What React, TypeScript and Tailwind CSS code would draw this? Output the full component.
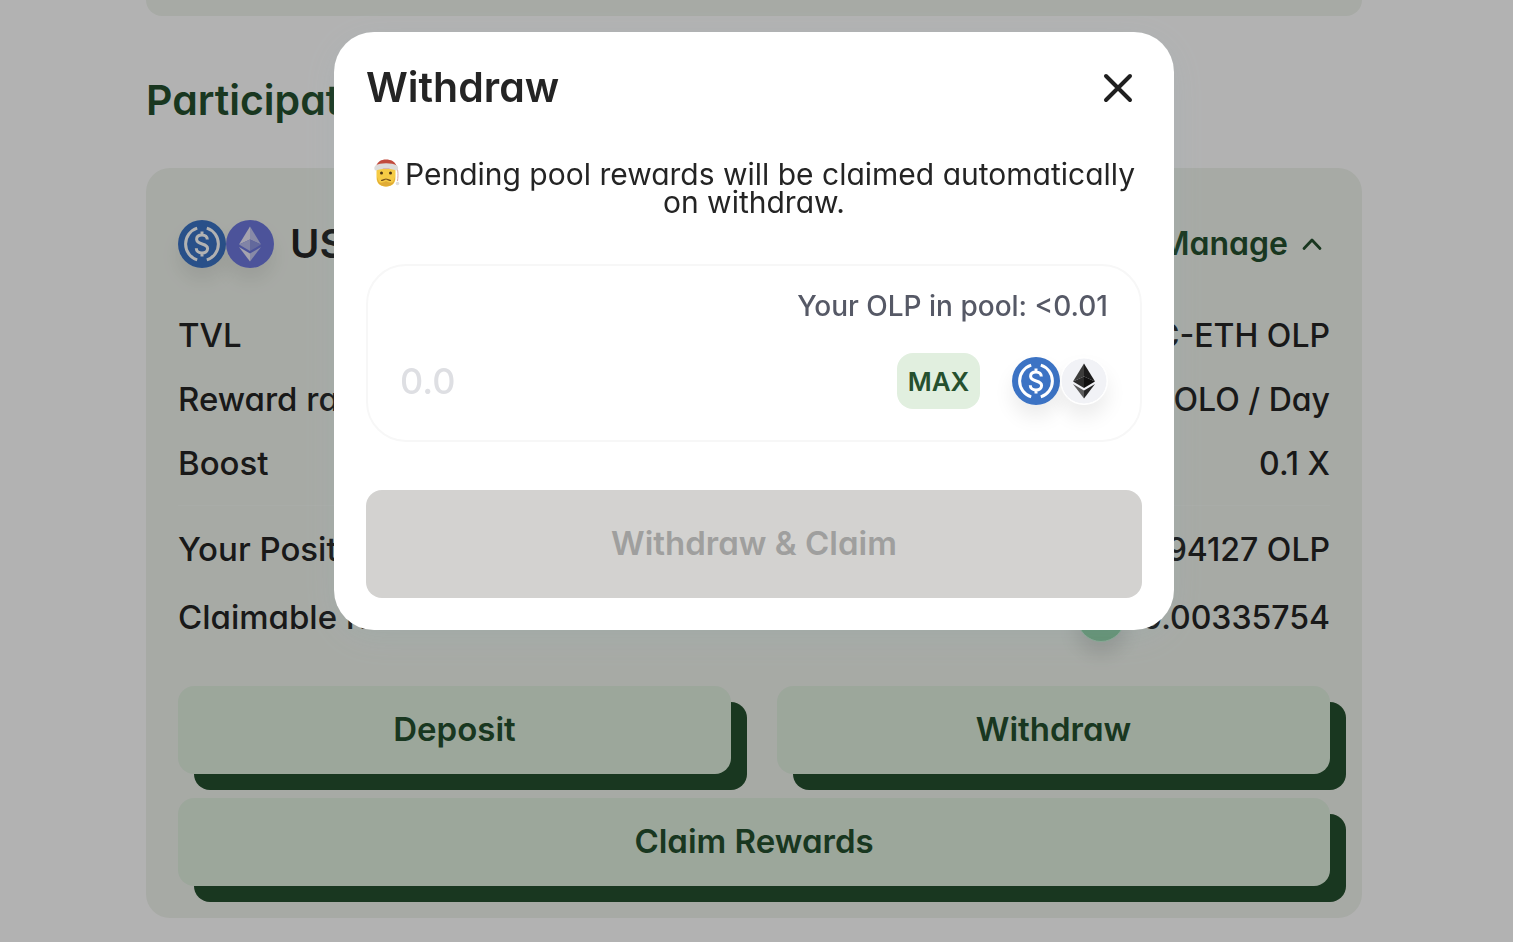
import React, { useState } from "react";
import type { ReactNode } from "react";

function UsdcIcon() {
  return (
    <svg viewBox="0 0 48 48" className="size-12" aria-hidden="true">
      <circle cx="24" cy="24" r="24" fill="#3c73c4" />
      <g fill="none" stroke="#fff" strokeWidth="3">
        <path d="M19.200 8.100A16.700 16.700 0 0 0 19.200 39.900" />
        <path d="M28.800 8.100A16.700 16.700 0 0 1 28.800 39.900" />
        <path d="M29.300 19.600c0-2.800-2.100-4.600-5.300-4.600-3.300 0-5.400 1.700-5.400 4.300 0 6.200 11 3.200 11 9.200 0 2.700-2.200 4.500-5.600 4.500-3.500 0-5.700-1.900-5.700-4.800M24 11.500v4M24 32.500v4" />
      </g>
    </svg>
  );
}

function EthIcon({ dark = false }: { dark?: boolean }) {
  const c = dark
    ? { bg: "#f1f2f6", a: "#3c3c3b", b: "#1c1c1c", m: "#2b2b2b", n: "#101010", l: "#5c5c5c", r: "#262626" }
    : { bg: "#6d78dd", a: "#eceafa", b: "#c3c6f0", m: "#b9bdee", n: "#8f97e0", l: "#eceafa", r: "#c3c6f0" };
  return (
    <svg viewBox="0 0 48 48" className="size-12" aria-hidden="true">
      <circle cx="24" cy="24" r={dark ? 23 : 24} fill={c.bg} stroke={dark ? "#fff" : "none"} strokeWidth="1" />
      <path d="M24 6.500 13 24.500l11-5z" fill={c.a} />
      <path d="M24 6.500v13l11 5z" fill={c.b} />
      <path d="M13 24.500l11-5V31z" fill={c.m} />
      <path d="M35 24.500l-11-5V31z" fill={c.n} />
      <path d="M13 27l11 6.500V41.500z" fill={c.l} />
      <path d="M35 27l-11 6.500V41.500z" fill={c.r} />
    </svg>
  );
}

function ClausIcon() {
  return (
    <svg viewBox="0 0 28 32" className="-my-2 mr-1 inline-block h-8 w-7 align-[4px]" role="img" aria-label="Mx Claus">
      <path d="M22 7c3 3 3.500 10 2.500 17" stroke="#d9a9a2" strokeWidth="1" fill="none" />
      <path d="M3.500 12h19v8c0 6-3 9.500-9.500 9.500S3.500 26 3.500 20z" fill="#f6cb45" />
      <path d="M4 20c0 6 3 9.500 9 9.500s9-3.500 9-9.500l-2 5c-2 1.500-4 .5-7-1-3 1.500-5 2.500-7 1z" fill="#e0ab35" />
      <circle cx="8.500" cy="16" r="1.500" fill="#4d3514" />
      <circle cx="17.500" cy="16" r="1.500" fill="#4d3514" />
      <path d="M8 23.500c2.500 0 3.500-1.500 5-1.500s2.500 1.500 5 1.500" stroke="#7b551c" strokeWidth="1.200" fill="none" />
      <path d="M3 9C5 4.500 8 2.500 13 2.500S22 4.500 23.500 9v3H3z" fill="#c24b3d" />
      <path d="M2.500 8.500C7 5.500 19 5.500 24 8.500c1.800 1.500 1.500 5-.5 5-6-2.500-14.500-2.500-20.500 0-2 0-2.300-3.500-.5-5z" fill="#dddcda" />
      <circle cx="24.500" cy="26.500" r="1.800" fill="#dedede" />
    </svg>
  );
}

function TokenPair({ dark = false }: { dark?: boolean }) {
  return (
    <span className="flex">
      <span className="rounded-full shadow-[0_12px_20px_rgba(0,0,0,0.08)]">
        <UsdcIcon />
      </span>
      <span className="rounded-full shadow-[0_12px_20px_rgba(0,0,0,0.08)]">
        <EthIcon dark={dark} />
      </span>
    </span>
  );
}

function Row({ label, children }: { label: string; children: ReactNode }) {
  return (
    <div className="flex h-16 items-center justify-between">
      <dt className="text-[33px]">{label}</dt>
      <dd className="flex items-center gap-4 text-[32px]">{children}</dd>
    </div>
  );
}

function ActionButton({ children }: { children: ReactNode }) {
  return (
    <button
      type="button"
      className="h-22 w-full rounded-2xl bg-[#e0efdf] text-[33px] font-semibold text-[#25502e] shadow-[16px_16px_0_#25502e]"
    >
      {children}
    </button>
  );
}

function WithdrawDialog({ onClose }: { onClose: () => void }) {
  const [amount, setAmount] = useState("");
  return (
    <div className="fixed inset-0 flex items-start justify-center overflow-hidden bg-black/30 pt-8 pr-[5px]">
      <section
        role="dialog"
        aria-modal="true"
        aria-labelledby="withdraw-title"
        className="w-full max-w-[840px] rounded-[40px] bg-white p-8 shadow-[0_8px_32px_rgba(130,170,180,0.15)]"
      >
        <header className="flex h-12 items-center justify-between">
          <h2 id="withdraw-title" className="text-[41px] font-semibold">
            Withdraw
          </h2>
          <button type="button" aria-label="Close" onClick={onClose} className="flex size-12 items-center justify-center">
            <svg viewBox="0 0 48 48" className="size-12" fill="none" stroke="#1f1f1f" strokeWidth="4" strokeLinecap="round">
              <path d="M12 12l24 24M36 12l-24 24" />
            </svg>
          </button>
        </header>
        <p className="mt-12 text-center text-[30px] leading-7">
          <ClausIcon />
          Pending pool rewards will be claimed automatically on withdraw.
        </p>
        <div className="mt-12 rounded-[40px] border-2 border-[#f7f7f7] px-8 pt-5 pb-[31px]">
          <p className="text-right text-[28px] leading-10 font-medium text-[#565966]">Your OLP in pool: &lt;0.01</p>
          <div className="mt-[27px] flex h-14 items-center">
            <input
              type="text"
              inputMode="decimal"
              aria-label="Amount to withdraw"
              placeholder="0.0"
              value={amount}
              onChange={(e) => setAmount(e.target.value)}
              className="min-w-0 flex-1 bg-transparent text-[36px] font-medium outline-none placeholder:text-[#dedfe3]"
            />
            <button type="button" className="mr-8 h-14 w-[83px] rounded-2xl bg-[#e1efdf] text-[26px] font-semibold text-[#25502e]">
              MAX
            </button>
            <TokenPair dark />
          </div>
        </div>
        <button type="button" disabled className="mt-12 h-27 w-full rounded-2xl bg-[#d3d2d0] text-[33px] font-semibold text-[#9f9f9e]">
          Withdraw &amp; Claim
        </button>
      </section>
    </div>
  );
}

export default function App() {
  const [open, setOpen] = useState(true);
  return (
    <div className="min-h-screen bg-white pr-[5px] font-['Inter',sans-serif] text-[#242424] [font-feature-settings:'cv11']">
      <main className="mx-auto max-w-[1216px] pb-6">
        <div className="h-4 rounded-b-3xl bg-[#f0f4ed]" />
        <h1 className="mt-12 text-[41px] leading-[72px] font-semibold text-[#25502e]">Participating pools</h1>
        <section className="mt-8 rounded-3xl bg-[#f0f4ed] p-8">
          <header className="flex h-22 items-center gap-4">
            <TokenPair />
            <h2 className="flex-1 text-[40px] font-semibold">USDC-ETH</h2>
            <button type="button" onClick={() => setOpen(true)} className="flex items-center gap-3 pr-[6px] text-[32px] font-semibold text-[#25502e]">
              Manage
              <svg viewBox="0 0 24 24" className="size-6" fill="none" stroke="currentColor" strokeWidth="2.800" strokeLinecap="round" strokeLinejoin="round">
                <path d="M4 16.500l8-8.500 8 8.500" />
              </svg>
            </button>
          </header>
          <dl className="mt-4 font-medium">
            <Row label="TVL">1,204 USDC-ETH OLP</Row>
            <Row label="Reward rate">120 OOLO / Day</Row>
            <Row label="Boost">0.1 X</Row>
          </dl>
          <dl className="mt-[9px] grid gap-1 border-t border-[#f3f6f1] pt-3 font-medium">
            <Row label="Your Position">0.0094127 OLP</Row>
            <Row label="Claimable Rewards">
              <span className="size-12 rounded-full border border-[#c3efd2] bg-[#8fd0a5] shadow-[0_12px_20px_rgba(0,0,0,0.12)]" />
              0.00335754
            </Row>
          </dl>
          <div className="mt-9 grid grid-cols-2 gap-x-[46px] gap-y-6">
            <ActionButton>Deposit</ActionButton>
            <ActionButton>Withdraw</ActionButton>
            <div className="col-span-2">
              <ActionButton>Claim Rewards</ActionButton>
            </div>
          </div>
        </section>
      </main>
      {open && <WithdrawDialog onClose={() => setOpen(false)} />}
    </div>
  );
}
